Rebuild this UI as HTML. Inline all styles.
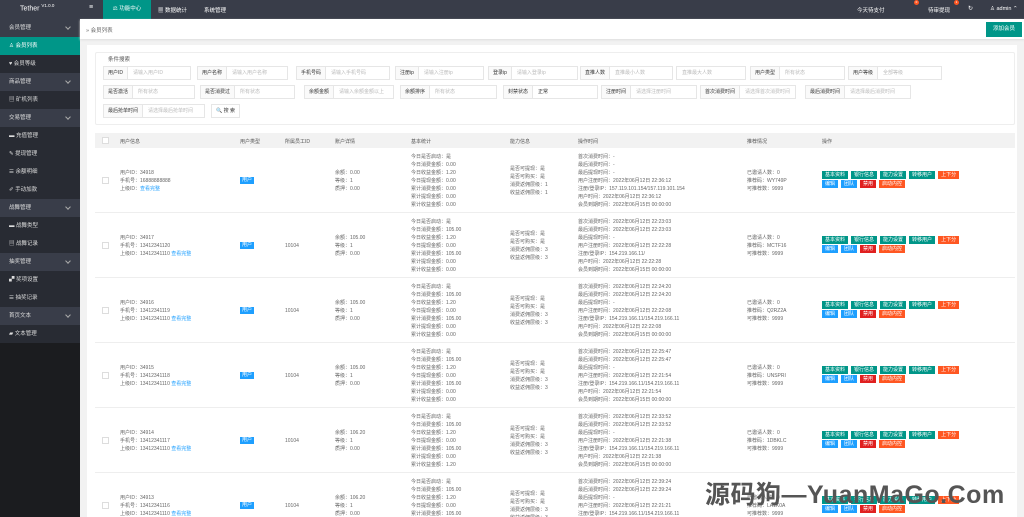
<!DOCTYPE html>
<html><head><meta charset="utf-8"><style>
*{margin:0;padding:0;box-sizing:border-box}
html{width:1024px;height:517px;overflow:hidden}
body{width:1024px;height:517px;overflow:hidden;background:#f2f2f2;font-family:"Liberation Sans","Noto Sans CJK SC",sans-serif;font-size:5px;color:#666;position:relative}
.a{position:absolute}
.top{left:0;top:0;width:1024px;height:19px;background:#393d49;color:#fff}
.side{left:0;top:19px;width:80px;height:498px;background:#1b1c1f}
.side div{height:18px;line-height:18px;font-size:5.5px;color:#ddd;padding-left:9px;position:relative}
.g{background:#393d49}.s{background:#282b33}.act{background:#009688!important;color:#fff!important}
.g:after{content:"";position:absolute;right:10px;top:6px;width:3px;height:3px;border-right:1px solid #aaa;border-bottom:1px solid #aaa;transform:rotate(45deg)}
.bc{left:80px;top:19px;width:944px;height:20px;background:#fff;box-shadow:0 1px 2px #ddd}
.card{left:87px;top:45px;width:930px;height:480px;background:#fff}
.f{position:absolute;height:14px;border:1px solid #e6e6e6;background:#fff;display:flex;line-height:12px}
.f b{font-weight:normal;background:#fafafa;border-right:1px solid #e6e6e6;padding:0 4px;color:#333;white-space:nowrap}
.f i{font-style:normal;color:#bbb;padding-left:5px;white-space:nowrap}
.th{left:95px;top:133px;width:920px;height:15px;background:#f2f2f2;color:#555}
.th span{position:absolute}
.r{position:absolute;left:95px;width:920px;height:65px;border-bottom:1px solid #eee;background:#fff}
.c{position:absolute;top:0;height:65px;display:flex;flex-direction:column;justify-content:center;line-height:8px;white-space:nowrap}
.cb{position:absolute;left:7px;top:29px;width:7px;height:7px;border:1px solid #ddd;background:#fff}
.th .cb{top:4px}
.tag{display:inline-block;background:#1e9fff;color:#fff;padding:0 2px;line-height:7px;width:fit-content}
.bt{display:inline-block;color:#fff;padding:0 3px;line-height:8px;margin:0 3px 1px 0}
.ops{position:absolute;left:727px;top:23px;line-height:9px;white-space:nowrap}
.t{background:#009688}.o{background:#ff5722}.b{background:#1e9fff}.rd{background:#e02020}
.lk{color:#1e9fff}
</style></head><body>
<div class="a top">
<span class="a" style="left:20px;top:3px;font-size:7px">Tether <sup style="font-size:4.5px">V1.0.0</sup></span>
<span class="a" style="left:89px;top:4px;font-size:7px">≡</span>
<div class="a" style="left:103px;top:0;width:48px;height:19px;background:#009688;line-height:19px;text-align:center;font-size:5.5px">⚖ 功能中心</div>
<span class="a" style="left:158px;top:6px;font-size:5.5px">▦ 数据统计</span>
<span class="a" style="left:204px;top:6px;font-size:5.5px">系统管理</span>
<span class="a" style="left:857px;top:6px;font-size:5.5px">今天待支付</span>
<span class="a" style="left:914px;top:0;width:5px;height:5px;border-radius:3px;background:#ff5722;font-size:3px;text-align:center">0</span>
<span class="a" style="left:928px;top:6px;font-size:5.5px">待审提现</span>
<span class="a" style="left:954px;top:0;width:5px;height:5px;border-radius:3px;background:#ff5722;font-size:3px;text-align:center">1</span>
<span class="a" style="left:968px;top:5px;font-size:6px">↻</span>
<span class="a" style="left:990px;top:6px;font-size:5.5px">♙ admin ⌃</span>
</div>
<div class="a side">
<div class="g">会员管理</div><div class="s act">♙ 会员列表</div><div class="s">♥ 会员等级</div>
<div class="g">商品管理</div><div class="s">▤ 矿机列表</div>
<div class="g">交易管理</div><div class="s">▬ 充值管理</div><div class="s">✎ 提现管理</div><div class="s">☰ 余额明细</div><div class="s">✐ 手动加款</div>
<div class="g">战舞管理</div><div class="s">▬ 战舞类型</div><div class="s">▤ 战舞记录</div>
<div class="g">抽奖管理</div><div class="s">▞ 奖项设置</div><div class="s">☰ 抽奖记录</div>
<div class="g">首页文本</div><div class="s">▰ 文本管理</div>
</div>
<div class="a bc"><span class="a" style="left:6px;top:7px;font-size:5.5px">» 会员列表</span></div>
<div class="a" style="left:986px;top:22px;width:36px;height:15px;background:#009688;color:#fff;text-align:center;line-height:15px;font-size:5.5px">添加会员</div>
<div class="a card"></div>
<div class="a" style="left:95px;top:52px;width:920px;height:73px;border:1px solid #eee;border-radius:2px"></div>
<span class="a" style="left:106px;top:55px;font-size:5.5px;background:#fff;padding:0 2px;color:#555">条件搜索</span>
<div class="f" style="left:103px;top:66px;width:88px"><b>用户ID</b><i>请输入用户ID</i></div>
<div class="f" style="left:197px;top:66px;width:91px"><b>用户名称</b><i>请输入用户名称</i></div>
<div class="f" style="left:296px;top:66px;width:94px"><b>手机号码</b><i>请输入手机号码</i></div>
<div class="f" style="left:395px;top:66px;width:89px"><b>注册ip</b><i>请输入注册ip</i></div>
<div class="f" style="left:488px;top:66px;width:90px"><b>登录ip</b><i>请输入登录ip</i></div>
<div class="f" style="left:580px;top:66px;width:93px"><b>直推人数</b><i>直推最小人数</i></div>
<div class="f" style="left:676px;top:66px;width:70px"><i>直推最大人数</i></div>
<div class="f" style="left:750px;top:66px;width:95px"><b>用户类型</b><i>所有状态</i></div>
<div class="f" style="left:848px;top:66px;width:94px"><b>用户等级</b><i>全部等级</i></div>
<div class="f" style="left:103px;top:85px;width:92px"><b>是否激活</b><i>所有状态</i></div>
<div class="f" style="left:200px;top:85px;width:95px"><b>是否消费过</b><i>所有状态</i></div>
<div class="f" style="left:304px;top:85px;width:90px"><b>余额金额</b><i>请输入余额金额以上</i></div>
<div class="f" style="left:400px;top:85px;width:97px"><b>余额排序</b><i>所有状态</i></div>
<div class="f" style="left:503px;top:85px;width:95px"><b>封禁状态</b><i style="color:#333">正常</i></div>
<div class="f" style="left:601px;top:85px;width:96px"><b>注册时间</b><i>请选择注册时间</i></div>
<div class="f" style="left:700px;top:85px;width:96px"><b>首次消费时间</b><i>请选择首次消费时间</i></div>
<div class="f" style="left:805px;top:85px;width:106px"><b>最后消费时间</b><i>请选择最后消费时间</i></div>
<div class="f" style="left:103px;top:104px;width:102px"><b>最后抢单时间</b><i>请选择最后抢单时间</i></div>
<div class="f" style="left:211px;top:104px;width:29px;justify-content:center"><span style="color:#333">🔍 搜 索</span></div>
<div class="a th">
<span class="cb"></span>
<span style="left:25px;top:5px">用户信息</span><span style="left:145px;top:5px">用户类型</span><span style="left:190px;top:5px">所属员工ID</span><span style="left:240px;top:5px">账户详情</span><span style="left:316px;top:5px">基本统计</span><span style="left:415px;top:5px">能力信息</span><span style="left:483px;top:5px">操作时间</span><span style="left:652px;top:5px">推荐情况</span><span style="left:727px;top:5px">操作</span>
</div>

<div class="r" style="top:148px"><span class="cb"></span>
<div class="c" style="left:25px"><div>用户ID：34918</div><div>手机号：16888888888</div><div>上级ID：<span class="lk">查看完整</span></div></div>
<div class="c" style="left:145px"><span class="tag">用户</span></div>
<div class="c" style="left:240px"><div>余额：0.00</div><div>等级：1</div><div>质押：0.00</div></div>
<div class="c" style="left:316px"><div>今日是否启动：是</div><div>今日消费金额：0.00</div><div>今日收益金额：1.20</div><div>今日提现金额：0.00</div><div>累计消费金额：0.00</div><div>累计提现金额：0.00</div><div>累计收益金额：0.00</div></div>
<div class="c" style="left:415px"><div>是否可提现：是</div><div>是否可购买：是</div><div>消费返佣层级：1</div><div>收益返佣层级：1</div></div>
<div class="c" style="left:483px"><div>首次消费时间：-</div><div>最后消费时间：-</div><div>最后提现时间：-</div><div>用户注册时间：2022年06月12日 22:36:12</div><div>注册/登录IP：157.119.101.154/157.119.101.154</div><div>用户时间：2022年06月12日 22:36:12</div><div>会员到期时间：2022年06月15日 00:00:00</div></div>
<div class="c" style="left:652px"><div>已邀请人数：0</div><div>推荐码：WY749P</div><div>可推荐数：9999</div></div>
<div class="ops"><div><span class="bt t">基本资料</span><span class="bt t">银行信息</span><span class="bt t">能力设置</span><span class="bt t">转移用户</span><span class="bt o">上下分</span></div><div><span class="bt b">编辑</span><span class="bt b">团队</span><span class="bt rd">禁用</span><span class="bt o">启动内控</span></div></div>
</div>

<div class="r" style="top:213px"><span class="cb"></span>
<div class="c" style="left:25px"><div>用户ID：34917</div><div>手机号：13412341120</div><div>上级ID：13412341110 <span class="lk">查看完整</span></div></div>
<div class="c" style="left:145px"><span class="tag">用户</span></div><div class="c" style="left:190px">10104</div>
<div class="c" style="left:240px"><div>余额：105.00</div><div>等级：1</div><div>质押：0.00</div></div>
<div class="c" style="left:316px"><div>今日是否启动：是</div><div>今日消费金额：105.00</div><div>今日收益金额：1.20</div><div>今日提现金额：0.00</div><div>累计消费金额：105.00</div><div>累计提现金额：0.00</div><div>累计收益金额：0.00</div></div>
<div class="c" style="left:415px"><div>是否可提现：是</div><div>是否可购买：是</div><div>消费返佣层级：3</div><div>收益返佣层级：3</div></div>
<div class="c" style="left:483px"><div>首次消费时间：2022年06月12日 22:23:03</div><div>最后消费时间：2022年06月12日 22:23:03</div><div>最后提现时间：-</div><div>用户注册时间：2022年06月12日 22:22:28</div><div>注册/登录IP：154.219.166.11/</div><div>用户时间：2022年06月12日 22:22:28</div><div>会员到期时间：2022年06月15日 00:00:00</div></div>
<div class="c" style="left:652px"><div>已邀请人数：0</div><div>推荐码：MCTF16</div><div>可推荐数：9999</div></div>
<div class="ops"><div><span class="bt t">基本资料</span><span class="bt t">银行信息</span><span class="bt t">能力设置</span><span class="bt t">转移用户</span><span class="bt o">上下分</span></div><div><span class="bt b">编辑</span><span class="bt b">团队</span><span class="bt rd">禁用</span><span class="bt o">启动内控</span></div></div>
</div>

<div class="r" style="top:278px"><span class="cb"></span>
<div class="c" style="left:25px"><div>用户ID：34916</div><div>手机号：13412341119</div><div>上级ID：13412341110 <span class="lk">查看完整</span></div></div>
<div class="c" style="left:145px"><span class="tag">用户</span></div><div class="c" style="left:190px">10104</div>
<div class="c" style="left:240px"><div>余额：105.00</div><div>等级：1</div><div>质押：0.00</div></div>
<div class="c" style="left:316px"><div>今日是否启动：是</div><div>今日消费金额：105.00</div><div>今日收益金额：1.20</div><div>今日提现金额：0.00</div><div>累计消费金额：105.00</div><div>累计提现金额：0.00</div><div>累计收益金额：0.00</div></div>
<div class="c" style="left:415px"><div>是否可提现：是</div><div>是否可购买：是</div><div>消费返佣层级：3</div><div>收益返佣层级：3</div></div>
<div class="c" style="left:483px"><div>首次消费时间：2022年06月12日 22:24:20</div><div>最后消费时间：2022年06月12日 22:24:20</div><div>最后提现时间：-</div><div>用户注册时间：2022年06月12日 22:22:08</div><div>注册/登录IP：154.219.166.11/154.219.166.11</div><div>用户时间：2022年06月12日 22:22:08</div><div>会员到期时间：2022年06月15日 00:00:00</div></div>
<div class="c" style="left:652px"><div>已邀请人数：0</div><div>推荐码：Q2RZ2A</div><div>可推荐数：9999</div></div>
<div class="ops"><div><span class="bt t">基本资料</span><span class="bt t">银行信息</span><span class="bt t">能力设置</span><span class="bt t">转移用户</span><span class="bt o">上下分</span></div><div><span class="bt b">编辑</span><span class="bt b">团队</span><span class="bt rd">禁用</span><span class="bt o">启动内控</span></div></div>
</div>

<div class="r" style="top:343px"><span class="cb"></span>
<div class="c" style="left:25px"><div>用户ID：34915</div><div>手机号：13412341118</div><div>上级ID：13412341110 <span class="lk">查看完整</span></div></div>
<div class="c" style="left:145px"><span class="tag">用户</span></div><div class="c" style="left:190px">10104</div>
<div class="c" style="left:240px"><div>余额：105.00</div><div>等级：1</div><div>质押：0.00</div></div>
<div class="c" style="left:316px"><div>今日是否启动：是</div><div>今日消费金额：105.00</div><div>今日收益金额：1.20</div><div>今日提现金额：0.00</div><div>累计消费金额：105.00</div><div>累计提现金额：0.00</div><div>累计收益金额：0.00</div></div>
<div class="c" style="left:415px"><div>是否可提现：是</div><div>是否可购买：是</div><div>消费返佣层级：3</div><div>收益返佣层级：3</div></div>
<div class="c" style="left:483px"><div>首次消费时间：2022年06月12日 22:25:47</div><div>最后消费时间：2022年06月12日 22:25:47</div><div>最后提现时间：-</div><div>用户注册时间：2022年06月12日 22:21:54</div><div>注册/登录IP：154.219.166.11/154.219.166.11</div><div>用户时间：2022年06月12日 22:21:54</div><div>会员到期时间：2022年06月15日 00:00:00</div></div>
<div class="c" style="left:652px"><div>已邀请人数：0</div><div>推荐码：UNSPRI</div><div>可推荐数：9999</div></div>
<div class="ops"><div><span class="bt t">基本资料</span><span class="bt t">银行信息</span><span class="bt t">能力设置</span><span class="bt t">转移用户</span><span class="bt o">上下分</span></div><div><span class="bt b">编辑</span><span class="bt b">团队</span><span class="bt rd">禁用</span><span class="bt o">启动内控</span></div></div>
</div>

<div class="r" style="top:408px"><span class="cb"></span>
<div class="c" style="left:25px"><div>用户ID：34914</div><div>手机号：13412341117</div><div>上级ID：13412341110 <span class="lk">查看完整</span></div></div>
<div class="c" style="left:145px"><span class="tag">用户</span></div><div class="c" style="left:190px">10104</div>
<div class="c" style="left:240px"><div>余额：106.20</div><div>等级：1</div><div>质押：0.00</div></div>
<div class="c" style="left:316px"><div>今日是否启动：是</div><div>今日消费金额：105.00</div><div>今日收益金额：1.20</div><div>今日提现金额：0.00</div><div>累计消费金额：105.00</div><div>累计提现金额：0.00</div><div>累计收益金额：1.20</div></div>
<div class="c" style="left:415px"><div>是否可提现：是</div><div>是否可购买：是</div><div>消费返佣层级：3</div><div>收益返佣层级：3</div></div>
<div class="c" style="left:483px"><div>首次消费时间：2022年06月12日 22:33:52</div><div>最后消费时间：2022年06月12日 22:33:52</div><div>最后提现时间：-</div><div>用户注册时间：2022年06月12日 22:21:38</div><div>注册/登录IP：154.219.166.11/154.219.166.11</div><div>用户时间：2022年06月12日 22:21:38</div><div>会员到期时间：2022年06月15日 00:00:00</div></div>
<div class="c" style="left:652px"><div>已邀请人数：0</div><div>推荐码：1DBKLC</div><div>可推荐数：9999</div></div>
<div class="ops"><div><span class="bt t">基本资料</span><span class="bt t">银行信息</span><span class="bt t">能力设置</span><span class="bt t">转移用户</span><span class="bt o">上下分</span></div><div><span class="bt b">编辑</span><span class="bt b">团队</span><span class="bt rd">禁用</span><span class="bt o">启动内控</span></div></div>
</div>

<div class="r" style="top:473px"><span class="cb"></span>
<div class="c" style="left:25px"><div>用户ID：34913</div><div>手机号：13412341116</div><div>上级ID：13412341110 <span class="lk">查看完整</span></div></div>
<div class="c" style="left:145px"><span class="tag">用户</span></div><div class="c" style="left:190px">10104</div>
<div class="c" style="left:240px"><div>余额：106.20</div><div>等级：1</div><div>质押：0.00</div></div>
<div class="c" style="left:316px"><div>今日是否启动：是</div><div>今日消费金额：105.00</div><div>今日收益金额：1.20</div><div>今日提现金额：0.00</div><div>累计消费金额：105.00</div><div>累计提现金额：0.00</div><div>累计收益金额：1.20</div></div>
<div class="c" style="left:415px"><div>是否可提现：是</div><div>是否可购买：是</div><div>消费返佣层级：3</div><div>收益返佣层级：3</div></div>
<div class="c" style="left:483px"><div>首次消费时间：2022年06月12日 22:39:24</div><div>最后消费时间：2022年06月12日 22:39:24</div><div>最后提现时间：-</div><div>用户注册时间：2022年06月12日 22:21:21</div><div>注册/登录IP：154.219.166.11/154.219.166.11</div><div>用户时间：2022年06月12日 22:21:21</div><div>会员到期时间：2022年06月15日 00:00:00</div></div>
<div class="c" style="left:652px"><div>已邀请人数：0</div><div>推荐码：LA1K0A</div><div>可推荐数：9999</div></div>
<div class="ops"><div><span class="bt t">基本资料</span><span class="bt t">银行信息</span><span class="bt t">能力设置</span><span class="bt t">转移用户</span><span class="bt o">上下分</span></div><div><span class="bt b">编辑</span><span class="bt b">团队</span><span class="bt rd">禁用</span><span class="bt o">启动内控</span></div></div>
</div>

<div class="a" style="left:705px;top:475px;font-size:25px;font-weight:bold;color:#555;white-space:nowrap;letter-spacing:0.5px">源码狗—YuanMaGo.Com</div>
</body></html>
